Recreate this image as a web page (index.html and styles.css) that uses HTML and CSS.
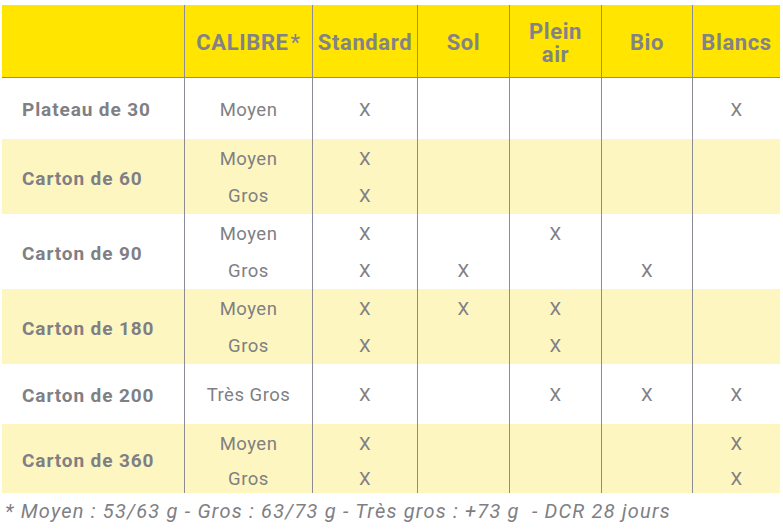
FILE: index.html
```html
<!DOCTYPE html>
<html lang="fr">
<head>
<meta charset="utf-8">
<title>Calibres</title>
<link rel="stylesheet" href="styles.css">
</head>
<body>
<div class="wrap">
<table class="grid">
  <colgroup>
    <col class="c1"><col class="c2"><col class="c3"><col class="c4"><col class="c5"><col class="c6"><col class="c7">
  </colgroup>
  <thead>
    <tr class="head">
      <th></th>
      <th>CALIBRE<span class="ast">*</span></th>
      <th>Standard</th>
      <th>Sol</th>
      <th>Plein<br>air</th>
      <th>Bio</th>
      <th>Blancs</th>
    </tr>
  </thead>
  <tbody class="g white">
    <tr class="single">
      <td class="lab">Plateau de 30</td><td>Moyen</td><td>X</td><td></td><td></td><td></td><td>X</td>
    </tr>
  </tbody>
  <tbody class="g pale">
    <tr class="sub a"><td class="lab" rowspan="2">Carton de 60</td><td>Moyen</td><td>X</td><td></td><td></td><td></td><td></td></tr>
    <tr class="sub b"><td>Gros</td><td>X</td><td></td><td></td><td></td><td></td></tr>
  </tbody>
  <tbody class="g white">
    <tr class="sub a"><td class="lab" rowspan="2">Carton de 90</td><td>Moyen</td><td>X</td><td></td><td>X</td><td></td><td></td></tr>
    <tr class="sub b"><td>Gros</td><td>X</td><td>X</td><td></td><td>X</td><td></td></tr>
  </tbody>
  <tbody class="g pale">
    <tr class="sub a"><td class="lab" rowspan="2">Carton de 180</td><td>Moyen</td><td>X</td><td>X</td><td>X</td><td></td><td></td></tr>
    <tr class="sub b"><td>Gros</td><td>X</td><td></td><td>X</td><td></td><td></td></tr>
  </tbody>
  <tbody class="g white">
    <tr class="single2">
      <td class="lab">Carton de 200</td><td>Très Gros</td><td>X</td><td></td><td>X</td><td>X</td><td>X</td>
    </tr>
  </tbody>
  <tbody class="g pale">
    <tr class="sub2 a"><td class="lab" rowspan="2">Carton de 360</td><td>Moyen</td><td>X</td><td></td><td></td><td></td><td>X</td></tr>
    <tr class="sub2 b"><td>Gros</td><td>X</td><td></td><td></td><td></td><td>X</td></tr>
  </tbody>
</table>
<p class="note">* Moyen : 53/63 g - Gros : 63/73 g - Très gros : +73 g&nbsp; - DCR 28 jours</p>
</div>
</body>
</html>
```
FILE: styles.css
```css
html, body {
  margin: 0;
  padding: 0;
  background: #ffffff;
}
.wrap {
  padding: 5px 0 0 2px;
  font-family: Roboto, "Liberation Sans", sans-serif;
  color: #7f7f84;
}
.grid {
  border-collapse: separate;
  border-spacing: 0;
  table-layout: fixed;
  width: 778px;
}
.c1 { width: 183px; }
.c2 { width: 128px; }
.c3 { width: 105px; }
.c4 { width: 92px; }
.c5 { width: 92px; }
.c6 { width: 91px; }
.c7 { width: 87px; }
.grid th, .grid td {
  box-sizing: border-box;
  padding: 0;
  text-align: center;
  vertical-align: middle;
  border-right: 1px solid #8c8c96;
}
.grid th:last-child, .grid td:last-child {
  border-right: none;
}
.head th {
  background: #ffe500;
  height: 73px;
  border-bottom: 1px solid #8c8c96;
  font-size: 22px;
  font-weight: 700;
  line-height: 23px;
  letter-spacing: 0.6px;
  color: #828287;
  padding-top: 3px;
}
.ast {
  font-weight: 400;
  margin-left: 2px;
}
.pale { background: #fef6c0; }
.white { background: #ffffff; }
.grid td {
  font-size: 18.5px;
  font-weight: 400;
  letter-spacing: 0.5px;
  padding-top: 2px;
}
.grid td.lab {
  text-align: left;
  padding-left: 20px;
  font-weight: 700;
  font-size: 19px;
  letter-spacing: 0.9px;
}
.single td { height: 61px; }
.single2 td { height: 60px; }
.sub td { height: 37.5px; }
.sub2 td { height: 34.5px; }
.sub.a td { padding-top: 3px; }
.sub.b td { padding-top: 2px; }
.sub.a td.lab { padding-top: 3px; }
.sub2.a td { padding-top: 6px; }
.sub2.b td { padding-top: 6px; }
.sub2.a td.lab { padding-top: 3px; }
.note {
  margin: 6px 0 0 3px;
  font-size: 20px;
  font-style: italic;
  font-weight: 400;
  line-height: 24px;
  letter-spacing: 1.2px;
  color: #7f7f84;
}
```
